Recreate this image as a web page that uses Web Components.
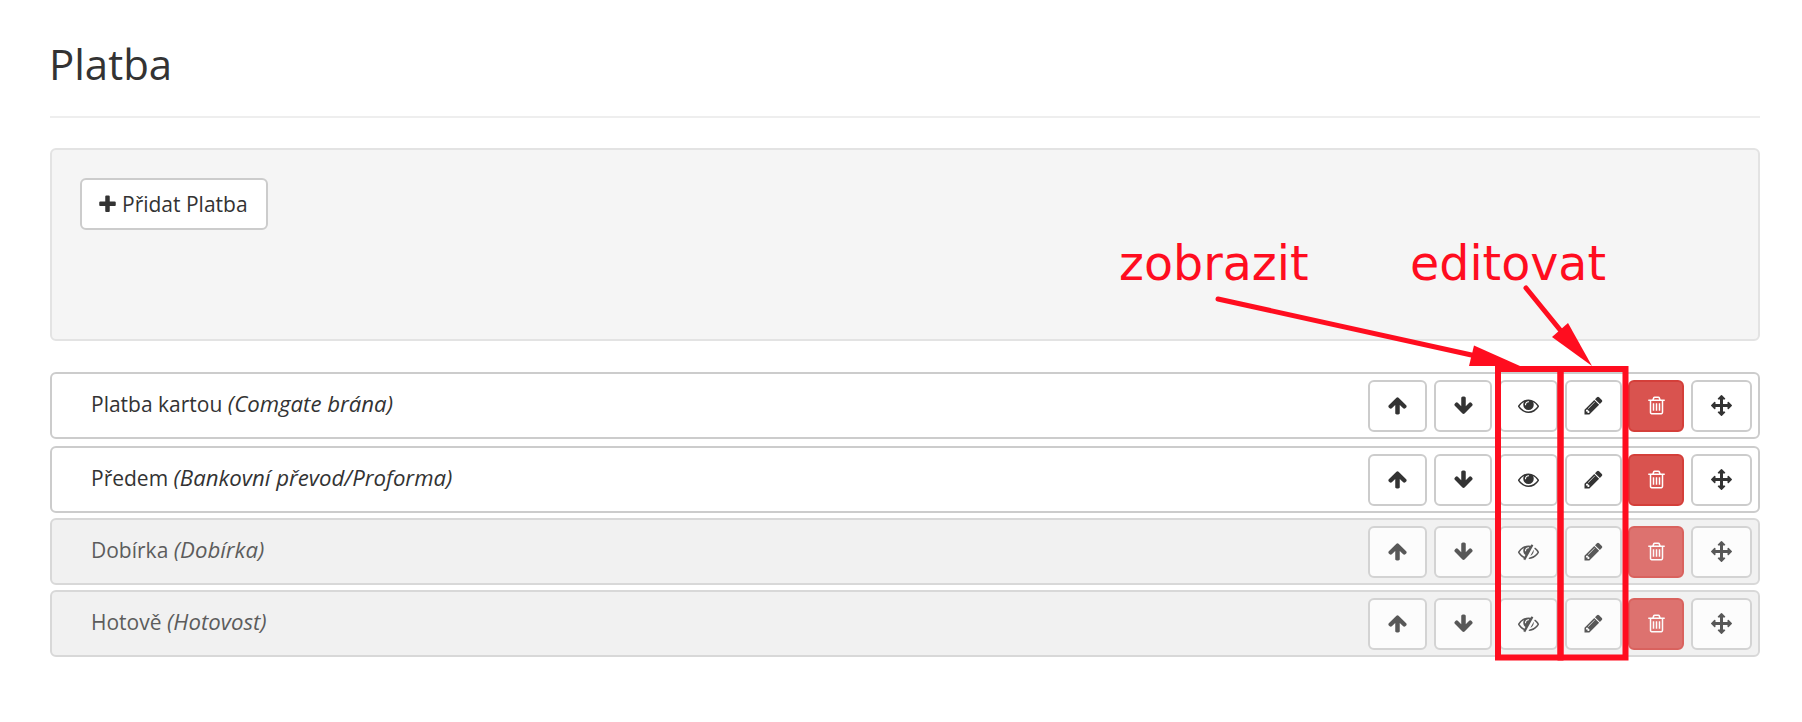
<!DOCTYPE html>
<html lang="cs">
<head>
<meta charset="utf-8">
<title>Platba</title>
<style>
  html, body { margin: 0; background: #fff; }
  body { font-family: "Open Sans", "Liberation Sans", sans-serif; color: #333; }
</style>
</head>
<body>
<platba-page></platba-page>
<script>
const IKONY = {
  up: 'M1675 971q0 51-37 90l-75 75q-38 38-91 38-54 0-90-38l-294-293v704q0 52-37.500 84.500t-90.500 32.500h-128q-53 0-90.500-32.500t-37.500-84.500v-704l-294 293q-36 38-90 38t-90-38l-75-75q-38-38-38-90 0-53 38-91l651-651q35-37 90-37 54 0 91 37l651 651q37 39 37 91z',
  down: 'M1675 832q0 53-37 90l-651 652q-39 37-91 37-53 0-90-37l-651-652q-38-36-38-90 0-53 38-91l74-75q39-37 91-37 53 0 90 37l294 294v-704q0-52 38-90t90-38h128q52 0 90 38t38 90v704l294-294q37-37 90-37 52 0 91 37l75 75q37 39 37 91z',
  plus: 'M1600 736v192q0 40-28 68t-68 28h-416v416q0 40-28 68t-68 28h-192q-40 0-68-28t-28-68v-416h-416q-40 0-68-28t-28-68v-192q0-40 28-68t68-28h416v-416q0-40 28-68t68-28h192q40 0 68 28t28 68v416h416q40 0 68 28t28 68z',
  eye: 'M1664 960q-152-236-381-353 61 104 61 225 0 185-131.500 316.500t-316.500 131.500-316.500-131.500-131.500-316.500q0-121 61-225-229 117-381 353 133 205 333.500 326.500t434.500 121.500 434.500-121.500 333.500-326.500zm-720-384q0-20-14-34t-34-14q-125 0-214.500 89.500t-89.500 214.500q0 20 14 34t34 14 34-14 14-34q0-86 61-147t147-61q20 0 34-14t14-34zm848 384q0 34-20 69-140 230-376.500 368.500t-499.500 138.500-499.500-139-376.500-368q-20-35-20-69t20-69q140-229 376.500-368t499.500-139 499.500 139 376.500 368q20 35 20 69z',
  eyeoff: 'M555 1335l78-141q-87-63-136-159t-49-203q0-121 61-225-229 117-381 353 167 258 427 375zm389-759q0-20-14-34t-34-14q-125 0-214.500 89.500t-89.500 214.500q0 20 14 34t34 14 34-14 14-34q0-86 61-147t147-61q20 0 34-14t14-34zm363-191q0 7-1 9-106 189-316 567t-315 566l-49 89q-10 16-28 16-12 0-134-70-16-10-16-28 0-12 44-87-143-65-263.500-173t-208.500-245q-20-31-20-69t20-69q153-235 380-371t496-136q89 0 180 17l54-97q10-16 28-16 5 0 18 6t31 15.500 33 18.500 31.500 18.500 19.500 11.500q16 10 16 27zm37 447q0 139-79 253.500t-209 164.500l280-502q8 45 8 84zm448 128q0 35-20 69-39 64-109 145-150 172-347.500 267t-419.500 95l74-132q212-18 392.500-137t301.500-307q-115-179-282-294l63-112q95 64 182.500 153t144.500 184q20 34 20 69z',
  pencil: 'M491 1536l91-91-235-235-91 91v107h128v128h107zm523-928q0-22-22-22-10 0-17 7l-542 542q-7 7-7 17 0 22 22 22 10 0 17-7l542-542q7-7 7-17zm-54-192l416 416-832 832h-416v-416zm683 96q0 53-37 90l-166 166-416-416 166-165q36-38 90-38 53 0 91 38l235 234q37 39 37 91z',
  trash: 'M704 736v576q0 14-9 23t-23 9h-64q-14 0-23-9t-9-23v-576q0-14 9-23t23-9h64q14 0 23 9t9 23zm256 0v576q0 14-9 23t-23 9h-64q-14 0-23-9t-9-23v-576q0-14 9-23t23-9h64q14 0 23 9t9 23zm256 0v576q0 14-9 23t-23 9h-64q-14 0-23-9t-9-23v-576q0-14 9-23t23-9h64q14 0 23 9t9 23zm128 724v-948h-896v948q0 22 7 40.500t14.500 27 10.500 8.500h832q3 0 10.500-8.500t14.500-27 7-40.500zm-672-1076h448l-48-117q-7-9-17-11h-317q-10 2-17 11zm928 32v64q0 14-9 23t-23 9h-96v948q0 83-47 143.500t-113 60.500h-832q-66 0-113-58.500t-47-141.500v-952h-96q-14 0-23-9t-9-23v-64q0-14 9-23t23-9h309l70-167q15-37 54-63t79-26h320q40 0 79 26t54 63l70 167h309q14 0 23 9t9 23z',
  move: 'M1792 896q0 26-19 45l-256 256q-19 19-45 19t-45-19-19-45v-128h-384v384h128q26 0 45 19t19 45-19 45l-256 256q-19 19-45 19t-45-19l-256-256q-19-19-19-45t19-45 45-19h128v-384h-384v128q0 26-19 45t-45 19-45-19l-256-256q-19-19-19-45t19-45l256-256q19-19 45-19t45 19 19 45v128h384v-384h-128q-26 0-45-19t-19-45 19-45l256-256q19-19 45-19t45 19l256 256q19 19 19 45t-19 45-45 19h-128v384h384v-128q0-26 19-45t45-19 45 19l256 256q19 19 19 45z'
};

function ikona(nombre) {
  return `<svg viewBox="0 0 1792 1792" width="21" height="21" aria-hidden="true"><path fill="currentColor" d="${IKONY[nombre]}"/></svg>`;
}

class BotonIcono extends HTMLElement {
  constructor() {
    super();
    this.attachShadow({ mode: 'open' });
  }

  connectedCallback() {
    const nombre = this.getAttribute('icon');
    this.shadowRoot.innerHTML = `
      <style>
        :host {
          display: flex;
          align-items: center;
          justify-content: center;
          box-sizing: border-box;
          height: 52px;
          width: ${this.getAttribute('w')}px;
          background: #fff;
          border: 2px solid #ccc;
          border-radius: 6px;
          color: #333;
        }
        :host([danger]) {
          background: #d9534f;
          border-color: #d43f3a;
          color: #fff;
        }
      </style>
      ${ikona(nombre)}
    `;
  }
}

class FilaPago extends HTMLElement {
  constructor() {
    super();
    this.attachShadow({ mode: 'open' });
  }

  connectedCallback() {
    const oculto = this.hasAttribute('hidden-item');
    this.shadowRoot.innerHTML = `
      <style>
        :host {
          display: flex;
          align-items: center;
          box-sizing: border-box;
          height: 67px;
          padding: 0 6px 0 39px;
          background: #fff;
          border: 2px solid #ccc;
          border-radius: 6px;
        }
        :host([hidden-item]) {
          background: #f1f1f1;
          border-color: #d8d8d8;
        }
        :host([hidden-item]) .botones { opacity: .8; }
        :host([hidden-item]) .texto { opacity: .78; }
        .texto {
          flex: 1;
          font-size: 21px;
          line-height: 30px;
          padding-bottom: 4px;
        }
        ::slotted(i) { font-size: 22.2px; }
        .botones { display: flex; gap: 7px; }
        .pegado { margin-left: -1px; }
      </style>
      <div class="texto"><slot></slot></div>
      <div class="botones">
        <boton-icono icon="up" w="59"></boton-icono>
        <boton-icono icon="down" w="58"></boton-icono>
        <boton-icono icon="${oculto ? 'eyeoff' : 'eye'}" w="59"></boton-icono>
        <boton-icono icon="pencil" w="57"></boton-icono>
        <boton-icono class="pegado" icon="trash" w="56" danger></boton-icono>
        <boton-icono icon="move" w="61"></boton-icono>
      </div>
    `;
  }
}

class CajaAgregar extends HTMLElement {
  constructor() {
    super();
    this.attachShadow({ mode: 'open' });
  }

  connectedCallback() {
    this.shadowRoot.innerHTML = `
      <style>
        :host {
          display: block;
          box-sizing: border-box;
          height: 193px;
          padding: 28px;
          background: #f5f5f5;
          border: 2px solid #e3e3e3;
          border-radius: 6px;
        }
        .agregar {
          display: inline-flex;
          align-items: center;
          gap: 4px;
          box-sizing: border-box;
          height: 52px;
          width: 188px;
          padding-left: 17px;
          background: #fff;
          border: 2px solid #ccc;
          border-radius: 6px;
          font-size: 21px;
          color: #333;
        }
        svg { flex: none; margin-left: -2px; }
      </style>
      <div class="agregar">${ikona('plus')}<slot></slot></div>
    `;
  }
}

class NotasRojas extends HTMLElement {
  constructor() {
    super();
    this.attachShadow({ mode: 'open' });
  }

  connectedCallback() {
    this.shadowRoot.innerHTML = `
      <style>
        :host { position: absolute; left: 0; top: 0; width: 1802px; height: 722px; pointer-events: none; }
        svg { position: absolute; left: 0; top: 0; }
        span {
          position: absolute;
          font-family: "DejaVu Sans", sans-serif;
          font-size: 47.5px;
          line-height: 60px;
          color: #ff0d1f;
          white-space: nowrap;
        }
      </style>
      <span style="left:1119px;top:234px">zobrazit</span>
      <span style="left:1410px;top:234px">editovat</span>
      <svg width="1802" height="722" viewBox="0 0 1802 722" aria-hidden="true">
        <g fill="none" stroke="#ff0d1f">
          <path stroke-width="6" d="M1498 369H1560.500V657.500H1498Z"/>
          <path stroke-width="6" d="M1560.500 369H1625.500V657.500H1560.500Z"/>
          <path stroke-width="5" stroke-linecap="round" d="M1218 299L1476 356"/>
          <path stroke-width="5" stroke-linecap="round" d="M1526 288L1561 331"/>
        </g>
        <g fill="#ff0d1f">
          <path d="M1474 345.500L1520 366H1469Z"/>
          <path d="M1568 323L1592 366L1552 337Z"/>
        </g>
      </svg>
    `;
  }
}

class PaginaPlatba extends HTMLElement {
  constructor() {
    super();
    this.attachShadow({ mode: 'open' });
  }

  connectedCallback() {
    this.shadowRoot.innerHTML = `
      <style>
        :host {
          display: block;
          box-sizing: border-box;
          width: 1802px;
          height: 722px;
          padding: 0 42px 0 50px;
          overflow: hidden;
          font-family: "Open Sans", "Liberation Sans", sans-serif;
          color: #333;
        }
        h1 {
          margin: 0;
          box-sizing: border-box;
          height: 118px;
          padding-top: 36px;
          font-size: 42px;
          line-height: 56px;
          font-weight: 400;
          text-indent: -1px;
          border-bottom: 2px solid #eee;
        }
        caja-agregar { margin: 30px 0 31px; }
        .lista { display: flex; flex-direction: column; gap: 5px; }
        .primera { margin-bottom: 2px; }
      </style>
      <h1>Platba</h1>
      <caja-agregar>Přidat Platba</caja-agregar>
      <div class="lista">
        <fila-pago class="primera">Platba kartou <i>(Comgate brána)</i></fila-pago>
        <fila-pago>Předem <i>(Bankovní převod/Proforma)</i></fila-pago>
        <fila-pago hidden-item>Dobírka <i>(Dobírka)</i></fila-pago>
        <fila-pago hidden-item>Hotově <i>(Hotovost)</i></fila-pago>
      </div>
      <notas-rojas></notas-rojas>
    `;
  }
}

customElements.define('boton-icono', BotonIcono);
customElements.define('fila-pago', FilaPago);
customElements.define('caja-agregar', CajaAgregar);
customElements.define('notas-rojas', NotasRojas);
customElements.define('platba-page', PaginaPlatba);
</script>
</body>
</html>
